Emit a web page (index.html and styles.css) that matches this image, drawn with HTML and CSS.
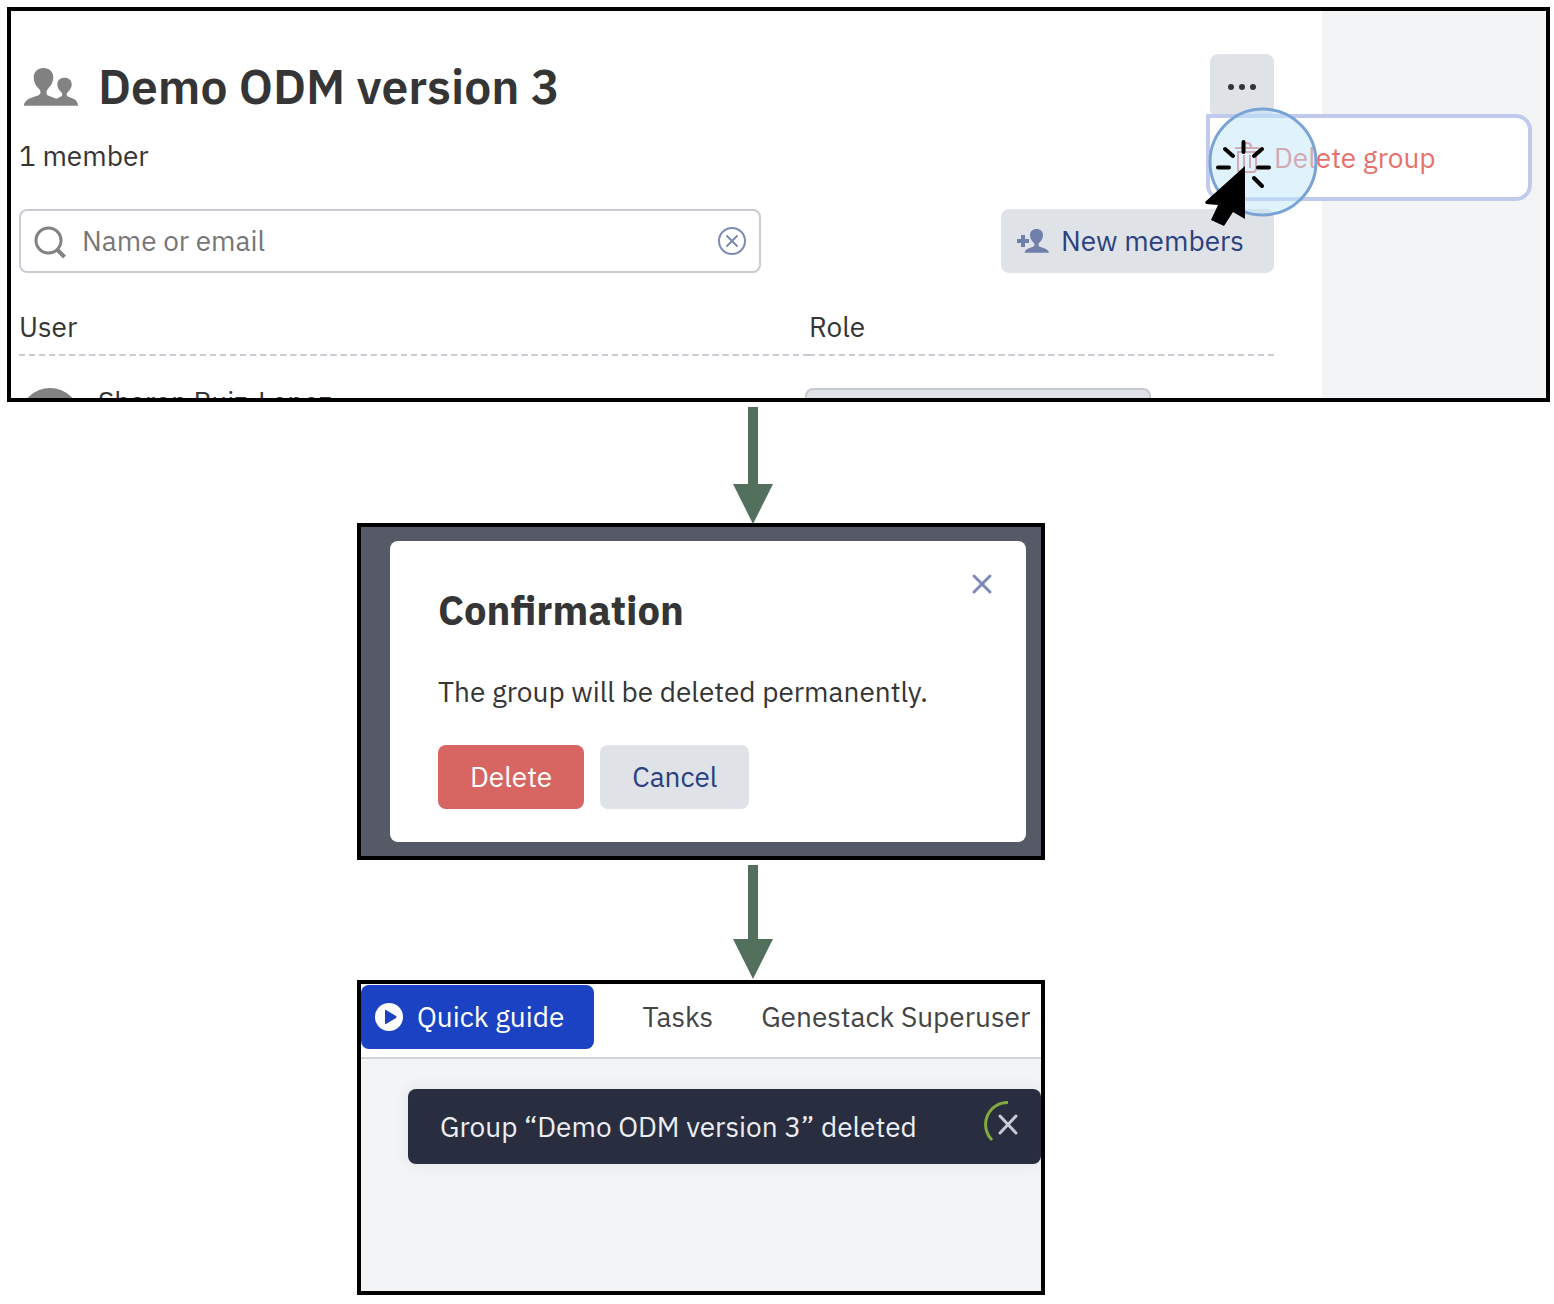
FILE: index.html
```html
<!DOCTYPE html>
<html lang="en">
<head>
<meta charset="utf-8">
<meta name="viewport" content="width=device-width, initial-scale=1">
<title>Delete a group</title>
<link rel="stylesheet" href="styles.css">
</head>
<body>
<main class="flow">
  <section class="panel group-panel" aria-label="Group">
    <div class="group-main">
      <header class="group-header">
        <svg class="group-icon" viewBox="0 0 54 40" aria-hidden="true"><path d="M19.500 2c6 0 9.800 4 9.800 9.500 0 4.500-2 7.500-4.300 10-2.200 2.500-2.500 3.500-2.500 5.500 0 2 1.500 2.500 4 3.500l6 2.200 3.500-1.700c1.500-.7 2.300-1.300 2.300-2.500 0-1-.5-1.700-1.700-3-1.800-1.900-3.300-4.300-3.300-7 0-4 3-6.700 7.200-6.700s7.200 2.700 7.200 6.700c0 2.700-1.500 5.100-3.300 7-1.200 1.300-1.700 2-1.700 3 0 1.500 1 2 3 2.700 5.500 1.800 8.300 4.300 8.300 8.500H0c0-4.200 3.500-6.700 9.500-8.700 4-1.300 7-2 7-4.500 0-2-.8-3-2.800-5-2.300-2.500-4-5.500-4-10C9.700 6 13.500 2 19.500 2z"/></svg>
        <h1 class="group-title">Demo ODM version 3</h1>
        <div class="menu-anchor">
          <button class="btn btn-more" type="button" aria-label="More actions" aria-expanded="true">
            <svg width="30" height="8" viewBox="0 0 30 8" aria-hidden="true"><circle cx="4" cy="5" r="3"/><circle cx="15" cy="5" r="3"/><circle cx="26" cy="5" r="3"/></svg>
          </button>
          <div class="menu">
            <button class="menu-item" type="button">
              <svg width="26" height="32" viewBox="0 0 26 32" aria-hidden="true"><path d="M1 6h24M9 5c0-3 1.500-4 4-4s4 1 4 4M4 10v17q0 3 3 3h12q3 0 3-3V10zM10 13v13M16 13v13"/></svg>
              Delete group
            </button>
          </div>
          <svg class="pointer" width="116" height="120" viewBox="0 0 116 120" aria-hidden="true">
            <circle class="pointer-halo" cx="59" cy="54" r="53"/>
            <path class="pointer-rays" d="M39.500 34v10M21 41l8 7M58 41l-8 7M14 59.500h11M54 59.500h11M50 70l8 8"/>
            <path d="M41 58v53l-12-7-9 14-13-6 7-15-12-1-1-2z"/>
          </svg>
        </div>
      </header>
      <p class="member-count">1 member</p>
      <div class="toolbar">
        <div class="search">
          <svg width="34" height="34" viewBox="0 0 34 34" aria-hidden="true"><circle cx="14.500" cy="16.500" r="12.500"/><path class="search-handle" d="M23.500 26l7 7"/></svg>
          <input class="search-input" type="text" placeholder="Name or email" aria-label="Name or email">
          <button class="icon-btn" type="button" aria-label="Clear search">
            <svg width="28" height="28" viewBox="0 0 28 28" aria-hidden="true"><circle cx="14" cy="14" r="13"/><path d="M9 9l10 10M19 9L9 19"/></svg>
          </button>
        </div>
        <button class="btn btn-members" type="button">
          <svg width="32" height="26" viewBox="0 0 32 26" aria-hidden="true"><path d="M4 7h4v4h4v4H8v4H4v-4H0v-4h4zM19.500 1c4 0 6.500 2.500 6.500 6 0 3-1.500 5.500-3 7-1.200 1.200-1.500 1.800-1.500 3 0 1.500 1.500 1.800 3.500 2.500 4 1.200 6.500 2.500 7 5.300H7.500c.3-2.800 2.500-4.100 6.500-5.300 2-.7 3.500-1 3.500-2.500 0-1.200-.3-1.800-1.500-3-1.500-1.500-3-4-3-7 0-3.500 2.500-6 6.500-6z"/></svg>
          New members
        </button>
      </div>
      <table class="members">
        <thead><tr><th class="col-user" scope="col">User</th><th scope="col">Role</th></tr></thead>
        <tbody><tr>
          <td><div class="user"><span class="avatar"></span>Sharon Ruiz-Lopez</div></td>
          <td><select class="role" aria-label="Role"><option></option></select></td>
        </tr></tbody>
      </table>
    </div>
  </section>

  <svg class="arrow" width="40" height="117" viewBox="0 0 40 117" aria-hidden="true"><path d="M15 0h10v77h15L20 117 0 77h15z"/></svg>

  <section class="panel step backdrop">
    <div class="dialog" role="dialog" aria-labelledby="dialog-title">
      <div class="dialog-head">
        <h2 class="dialog-title" id="dialog-title">Confirmation</h2>
        <button class="icon-btn" type="button" aria-label="Close">
          <svg width="20" height="20" viewBox="0 0 20 20" aria-hidden="true"><path d="M2 2l16 16M18 2L2 18"/></svg>
        </button>
      </div>
      <p class="dialog-text">The group will be deleted permanently.</p>
      <div class="dialog-actions">
        <button class="btn btn-delete" type="button">Delete</button>
        <button class="btn" type="button">Cancel</button>
      </div>
    </div>
  </section>

  <svg class="arrow" width="40" height="116" viewBox="0 0 40 116" aria-hidden="true"><path d="M15 0h10v74h15L20 114 0 74h15z"/></svg>

  <section class="panel step result">
    <nav class="topbar" aria-label="Main">
      <button class="btn btn-guide" type="button">
        <svg width="28" height="28" viewBox="0 0 28 28" aria-hidden="true"><circle cx="14" cy="14" r="14"/><path d="M10 7.500v13q0 1 1 .5l10-6q1-1 0-2l-10-6q-1-.5-1 .5z"/></svg>
        Quick guide
      </button>
      <a class="nav-link" href="#tasks">Tasks</a>
      <a class="nav-link" href="#account">Genestack Superuser</a>
    </nav>
    <div class="toast" role="status">
      <span>Group “Demo ODM version 3” deleted</span>
      <button class="icon-btn toast-close" type="button" aria-label="Dismiss">
        <svg width="48" height="48" viewBox="0 0 48 48" aria-hidden="true"><path class="toast-timer" d="M24 -.500A22 22 0 0 0 8 37"/><path d="M16 13l16 17M32 13L16 30"/></svg>
      </button>
    </div>
  </section>
</main>
</body>
</html>
```
FILE: styles.css
```css
:root {
  --ink: #353535;
  --navy: #2a4080;
  --slate: #7b8bb5;
  --fill: #dfe2e7;
  --line: #cccbd3;
  --canvas: #f3f4f6;
}

* { box-sizing: border-box; }

body {
  margin: 0;
  background: #fff;
  color: var(--ink);
  font: 28px/36px "IBM Plex Sans", Roboto, "Noto Sans", sans-serif;
}

h1, h2, p { margin: 0; }

button, input, select { font: inherit; color: inherit; }

button { cursor: pointer; }

svg { display: block; flex: none; overflow: visible; }

.flow {
  display: flex;
  flex-direction: column;
  padding: 7px 4px 8px 7px;
}

.panel {
  border: 4px solid #000;
  overflow: hidden;
}

.step {
  width: 688px;
  max-width: 100%;
  margin-left: 350px;
}

.arrow {
  margin: 5px 0 -1px 726px;
  fill: #53705c;
  position: relative;
}

.btn {
  display: flex;
  align-items: center;
  justify-content: center;
  height: 64px;
  padding: 0 32px;
  border: 0;
  border-radius: 8px;
  background: var(--fill);
  color: var(--navy);
  white-space: nowrap;
}

.icon-btn {
  display: flex;
  padding: 0;
  border: 0;
  background: none;
  fill: none;
  stroke: var(--slate);
  stroke-width: 2;
  stroke-linecap: round;
}

.dialog-head .icon-btn,
.toast-close { stroke-width: 3; }

/* Group page */

.group-panel {
  height: 395px;
  padding-right: 224px;
  background: linear-gradient(var(--canvas), var(--canvas)) right / 224px 100% no-repeat;
}

.group-main { padding: 43px 48px 0 8px; }

.group-header {
  display: flex;
  align-items: center;
}

.group-icon {
  width: 54px;
  height: 40px;
  margin: 0 20px 0 5px;
  fill: #828282;
}

.group-title {
  flex: 1;
  font-size: 48px;
  line-height: 64px;
  font-weight: 600;
}

.menu-anchor { position: relative; }

.btn-more {
  width: 64px;
  padding: 0;
  fill: var(--ink);
}

.menu {
  position: absolute;
  z-index: 1;
  top: 60px;
  left: -4px;
  width: 326px;
  height: 87px;
  border: 4px solid #c1caed;
  border-radius: 0 16px 16px 16px;
  background: #fff;
}

.menu-item {
  display: flex;
  align-items: center;
  gap: 14px;
  width: 100%;
  height: 100%;
  padding: 0 24px;
  border: 0;
  background: none;
  color: #e5716c;
  white-space: nowrap;
}

.menu-item svg {
  fill: none;
  stroke: #e5716c;
  stroke-width: 2;
}

.pointer {
  position: absolute;
  z-index: 2;
  top: 54px;
  left: -6px;
  pointer-events: none;
}

.pointer-halo {
  fill: rgba(190, 230, 250, 0.48);
  stroke: #7aa3d5;
  stroke-width: 3;
}

.pointer-rays {
  fill: none;
  stroke: #000;
  stroke-width: 4;
  stroke-linecap: round;
}

.member-count { margin-top: 20px; }

.toolbar {
  display: flex;
  justify-content: space-between;
  margin-top: 35px;
}

.search {
  display: flex;
  align-items: center;
  gap: 14px;
  width: 742px;
  height: 64px;
  padding: 0 13px;
  border: 2px solid var(--line);
  border-radius: 8px;
}

.search > svg {
  fill: none;
  stroke: #828282;
  stroke-width: 3;
}

.search .search-handle { stroke-width: 4; }

.search-input {
  flex: 1;
  min-width: 0;
  padding: 0;
  border: 0;
  outline: 0;
  background: none;
}

.search-input::placeholder { color: #777; }

.btn-members {
  gap: 12px;
  width: 273px;
  padding: 0 16px;
  justify-content: flex-start;
}

.btn-members svg { fill: #7080aa; }

.members {
  width: 100%;
  margin-top: 36px;
  border-collapse: collapse;
  table-layout: fixed;
}

.members th {
  height: 46px;
  padding: 0;
  border-bottom: 2px dashed var(--line);
  font-weight: 400;
  line-height: 36px;
  text-align: left;
  vertical-align: top;
}

.members td {
  padding: 32px 0 0;
  vertical-align: top;
}

.members .col-user { width: 790px; }

.user {
  display: flex;
  gap: 18px;
  padding-left: 1px;
  line-height: 28px;
}

.avatar {
  width: 60px;
  height: 60px;
  border-radius: 50%;
  background: #828282;
}

.role {
  width: 346px;
  height: 64px;
  margin-left: -4px;
  border: 2px solid #c8c9d0;
  border-radius: 8px;
  background: var(--fill);
  appearance: none;
}

/* Confirmation */

.backdrop {
  padding: 14px 15px 14px 29px;
  background: #555a66;
}

.dialog {
  padding: 33px 34px 33px 48px;
  border-radius: 8px;
  background: #fff;
}

.dialog-head {
  display: flex;
  align-items: flex-start;
  justify-content: space-between;
}

.dialog-title {
  padding-top: 12px;
  font-size: 40px;
  line-height: 48px;
  font-weight: 700;
}

.dialog-text { margin-top: 40px; }

.dialog-actions {
  display: flex;
  gap: 16px;
  margin-top: 35px;
}

.btn-delete {
  background: #d76662;
  color: #fff;
}

/* Result */

.result {
  height: 315px;
  background: var(--canvas);
}

.topbar {
  display: flex;
  align-items: center;
  gap: 48px;
  padding: 1px 0 8px;
  border-bottom: 2px solid #d1d2da;
  background: #fff;
}

.btn-guide {
  gap: 14px;
  padding: 0 30px 0 14px;
  background: #1a42c2;
  color: #fff;
  fill: #fff;
}

.btn-guide path { fill: #1a42c2; }

.nav-link {
  color: #444;
  text-decoration: none;
  white-space: nowrap;
}

.toast {
  display: flex;
  align-items: center;
  justify-content: space-between;
  height: 75px;
  margin: 30px 0 0 47px;
  padding: 0 9px 0 32px;
  border-radius: 8px;
  background: #282d3f;
  box-shadow: 0 0 16px rgba(40, 45, 63, 0.08);
  color: #eceef2;
  white-space: nowrap;
}

.toast-close { stroke: #c9ccd4; }

.toast-timer { stroke: #82aa3c; stroke-linecap: butt; }
```
